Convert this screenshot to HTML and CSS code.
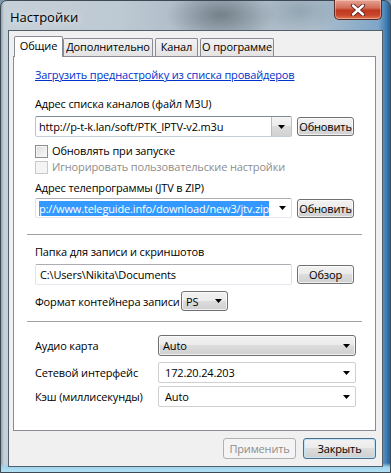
FILE: index.html
```html
<!DOCTYPE html>
<html lang="ru">
<head>
  <meta charset="UTF-8" />
  <title>Настройки</title>
  <link rel="stylesheet" href="styles.css">
</head>
<body>
  <div class="window">
    <div class="titlebar">
      <span class="title">Настройки</span>
      <button class="close" title="Закрыть">
        <svg width="16" height="12" viewBox="0 0 16 12">
          <path d="M3 1.5 L13 10.5 M13 1.5 L3 10.5" stroke="#5a2020" stroke-width="4.2" stroke-linecap="round"/>
          <path d="M3 1.5 L13 10.5 M13 1.5 L3 10.5" stroke="#fff" stroke-width="2.4" stroke-linecap="round"/>
        </svg>
      </button>
    </div>

    <div class="client">
      <div class="tabs">
        <div class="tab active">Общие</div>
        <div class="tab">Дополнительно</div>
        <div class="tab">Канал</div>
        <div class="tab">О программе</div>
      </div>

      <div class="panel">
        <a class="link" href="#">Загрузить преднастройку из списка провайдеров</a>

        <div class="label mt13">Адрес списка каналов (файл M3U)</div>
        <div class="row mt4">
          <div class="combo edit hot wide">
            <span class="value">http://p-t-k.lan/soft/PTK_IPTV-v2.m3u</span>
            <span class="arrow"><svg width="7" height="4" viewBox="0 0 7 4"><polygon points="0,0 7,0 3.5,4" fill="#000"/></svg></span>
          </div>
          <button class="btn">Обновить</button>
        </div>

        <label class="check mt6"><span class="box"></span>Обновлять при запуске</label>
        <label class="check disabled"><span class="box"></span>Игнорировать пользовательские настройки</label>

        <div class="label mt5">Адрес телепрограммы (JTV в ZIP)</div>
        <div class="row mt2 short">
          <div class="combo edit wide">
            <span class="value"><span class="selected">p://www.teleguide.info/download/new3/jtv.zip</span></span>
            <span class="arrow"><svg width="7" height="4" viewBox="0 0 7 4"><polygon points="0,0 7,0 3.5,4" fill="#000"/></svg></span>
          </div>
          <button class="btn">Обновить</button>
        </div>

        <div class="separator"></div>

        <div class="label mt9">Папка для записи и скриншотов</div>
        <div class="row mt4">
          <div class="textbox wide">C:\Users\Nikita\Documents</div>
          <button class="btn">Обзор</button>
        </div>

        <div class="row mt6 short">
          <span class="row-label fmt">Формат контейнера записи</span>
          <div class="combo drop small">
            <span class="value">PS</span>
            <span class="arrow"><svg width="7" height="4" viewBox="0 0 7 4"><polygon points="0,0 7,0 3.5,4" fill="#000"/></svg></span>
          </div>
        </div>

        <div class="separator mt10"></div>

        <div class="row mt13">
          <span class="row-label">Аудио карта</span>
          <div class="combo drop list-w">
            <span class="value">Auto</span>
            <span class="arrow"><svg width="7" height="4" viewBox="0 0 7 4"><polygon points="0,0 7,0 3.5,4" fill="#000"/></svg></span>
          </div>
        </div>
        <div class="row mt6">
          <span class="row-label">Сетевой интерфейс</span>
          <div class="combo plain list-w">
            <span class="value">172.20.24.203</span>
            <span class="arrow"><svg width="7" height="4" viewBox="0 0 7 4"><polygon points="0,0 7,0 3.5,4" fill="#000"/></svg></span>
          </div>
        </div>
        <div class="row mt3">
          <span class="row-label">Кэш (миллисекунды)</span>
          <div class="combo plain list-w">
            <span class="value">Auto</span>
            <span class="arrow"><svg width="7" height="4" viewBox="0 0 7 4"><polygon points="0,0 7,0 3.5,4" fill="#000"/></svg></span>
          </div>
        </div>
      </div>

      <div class="footer">
        <button class="btn big" disabled>Применить</button>
        <button class="btn big default">Закрыть</button>
      </div>
    </div>
  </div>
</body>
</html>
```

FILE: styles.css
```css
* {
  box-sizing: border-box;
  margin: 0;
  padding: 0;
}

body {
  width: 391px;
  height: 473px;
  overflow: hidden;
  font-family: 'Open Sans', 'Noto Sans', sans-serif;
  font-size: 11px;
  letter-spacing: -0.15px;
  color: #000;
  background: #7f97ab;
  white-space: nowrap;
}

/* aero glass frame */
.window {
  height: 473px;
  padding: 0 7px 5px 7px;
  border: 1px solid #3d4a56;
  border-radius: 7px 7px 0 0;
  display: flex;
  flex-direction: column;
  background:
    linear-gradient(to top, #b4e2f4 0, #9fd4ec 5px, rgba(160,210,235,0) 9px),
    radial-gradient(ellipse 55px 26px at 220px 14px, rgba(80,92,100,0.6), rgba(80,92,100,0)),
    radial-gradient(ellipse 40px 22px at 300px 10px, rgba(120,140,155,0.5), rgba(120,140,155,0)),
    linear-gradient(to right, #93a3b1 0, #c6d0d8 3px, #bdc9d3 30%, #a9b7c3 55%, #b1c0cc 80%, #7ea6c8 97%, #3f7fb6 99%, #2c5e8e 100%);
}

.titlebar {
  height: 29px;
  display: flex;
  align-items: flex-start;
  justify-content: space-between;
}

.title {
  padding: 7px 0 0 2px;
  font-size: 13px;
  letter-spacing: 0;
  line-height: 18px;
  color: #000;
  text-shadow: 0 0 8px rgba(255,255,255,0.9);
}

.close {
  width: 48px;
  height: 20px;
  margin: -1px 1px 0 0;
  border: 1px solid #5a2a24;
  border-top: none;
  border-radius: 0 0 5px 5px;
  background: linear-gradient(#e8a493 0, #d3705c 40%, #c0391f 55%, #c8462c 80%, #e07a50 100%);
  box-shadow: inset 0 0 0 1px rgba(255,220,210,0.45);
  display: flex;
  align-items: center;
  justify-content: center;
}

.client {
  flex: 1;
  background: #f0f0f0;
  border: 1px solid #53606c;
  display: flex;
  flex-direction: column;
}

/* tabs */
.tabs {
  display: flex;
  align-items: flex-end;
  height: 25px;
  margin: 0 6px 0 4px;
  padding-left: 1px;
  position: relative;
  z-index: 1;
}

.tab {
  height: 18px;
  line-height: 16px;
  text-align: center;
  border: 1px solid #898c95;
  border-bottom: none;
  background: linear-gradient(#f2f2f2, #e3e3e3);
  margin-right: 2px;
  border-radius: 2px 2px 0 0;
}

.tab.active {
  height: 21px;
  margin-bottom: -1px;
  margin-right: 0;
  background: #fff;
  line-height: 18px;
}

.tab:nth-child(1) { width: 49px; }
.tab:nth-child(2) { width: 90px; }
.tab:nth-child(3) { width: 43px; }
.tab:nth-child(4) { width: 74px; }

.panel {
  height: 375px;
  margin: 0 6px 0 4px;
  background: #fff;
  border: 1px solid #898c95;
  padding: 10px 22px 0 21px;
  display: flex;
  flex-direction: column;
  align-items: flex-start;
}

.link {
  color: #0033cc;
  line-height: 16px;
}

.label {
  line-height: 16px;
}

.mt2 { margin-top: 2px; }
.mt3 { margin-top: 3px; }
.mt4 { margin-top: 4px; }
.mt5 { margin-top: 5px; }
.mt6 { margin-top: 6px; }
.mt9 { margin-top: 9px; }
.mt10 { margin-top: 10px; }
.mt13 { margin-top: 13px; }

.row {
  display: flex;
  align-items: center;
  height: 21px;
}

.row.short {
  height: 20px;
}

.row-label {
  width: 123px;
}

.row-label.fmt {
  width: 146px;
}

/* combo boxes */
.combo {
  height: 100%;
  display: flex;
  align-items: center;
  border-radius: 2px;
  overflow: hidden;
}

.combo .value {
  flex: 1;
  padding-left: 4px;
  overflow: hidden;
}

.combo .arrow {
  width: 18px;
  height: 100%;
  display: flex;
  align-items: center;
  justify-content: center;
  flex-shrink: 0;
}

.combo.edit {
  background: #fff;
  border: 1px solid #abadb3;
  border-color: #abadb3 #dbdfe6 #e3e9ef #e2e3ea;
}

.combo.edit .value {
  padding-left: 3px;
}

.combo.hot {
  border-color: #7f8a96 #b8c2cc #c5ced8 #b8c2cc;
}

.combo.hot .arrow {
  width: 20px;
  border-left: 1px solid #b7bdc4;
  background: linear-gradient(#f4f4f4 0, #eaeaea 50%, #dcdcdc 50%, #d2d2d2 100%);
}

.selected {
  background: #3399ff;
  color: #fff;
}

.combo.drop {
  border: 1px solid #707070;
  border-radius: 3px;
  background: linear-gradient(#f2f2f2 0, #ebebeb 50%, #dddddd 50%, #cfcfcf 100%);
  box-shadow: inset 0 0 0 1px rgba(255,255,255,0.7);
}

.combo.plain {
  background: #fff;
  border: 1px solid #d0d0d0;
}

.combo.plain .value {
  padding-left: 6px;
}

.wide {
  width: 257px;
}

.list-w {
  width: 198px;
}

.small {
  width: 47px;
}

.textbox {
  height: 100%;
  line-height: 19px;
  padding-left: 4px;
  background: #fff;
  border: 1px solid #abadb3;
  border-color: #abadb3 #dbdfe6 #e3e9ef #e2e3ea;
  border-radius: 2px;
}

/* buttons */
.btn {
  font: inherit;
  letter-spacing: inherit;
  color: #000;
  height: 19px;
  width: 57px;
  margin-left: 5px;
  border: 1px solid #707070;
  border-radius: 3px;
  background: linear-gradient(#f2f2f2 0, #ebebeb 50%, #dddddd 50%, #cfcfcf 100%);
  box-shadow: inset 0 0 0 1px rgba(255,255,255,0.7);
  line-height: 15px;
}

.btn.big {
  width: 73px;
  height: 21px;
  margin-left: 0;
}

.btn.default {
  border-color: #4f6d88;
  box-shadow: inset 0 0 0 1px #bde4f6;
}

.btn:disabled {
  color: #8d8d8d;
  border-color: #adb2b5;
  background: #f4f4f4;
  box-shadow: none;
}

/* checkboxes */
.check {
  display: flex;
  align-items: center;
  height: 16px;
  line-height: 16px;
}

.check .box {
  width: 13px;
  height: 13px;
  margin-right: 4px;
  border: 1px solid #8e8f8f;
  background: linear-gradient(135deg, #dcdcdc, #fbfbfb);
  box-shadow: inset 0 0 0 1px #f4f4f4;
}

.check.disabled {
  color: #8d8d8d;
}

.check.disabled .box {
  border-color: #c9c9c9;
  background: #f4f4f4;
}

.separator {
  align-self: stretch;
  margin: 16px -9px 0 -8px;
  border-top: 1px solid #a0a0a0;
}

.separator.mt10 {
  margin-top: 10px;
}

.footer {
  display: flex;
  justify-content: flex-end;
  gap: 7px;
  margin-top: 7px;
  padding-right: 6px;
}
```
